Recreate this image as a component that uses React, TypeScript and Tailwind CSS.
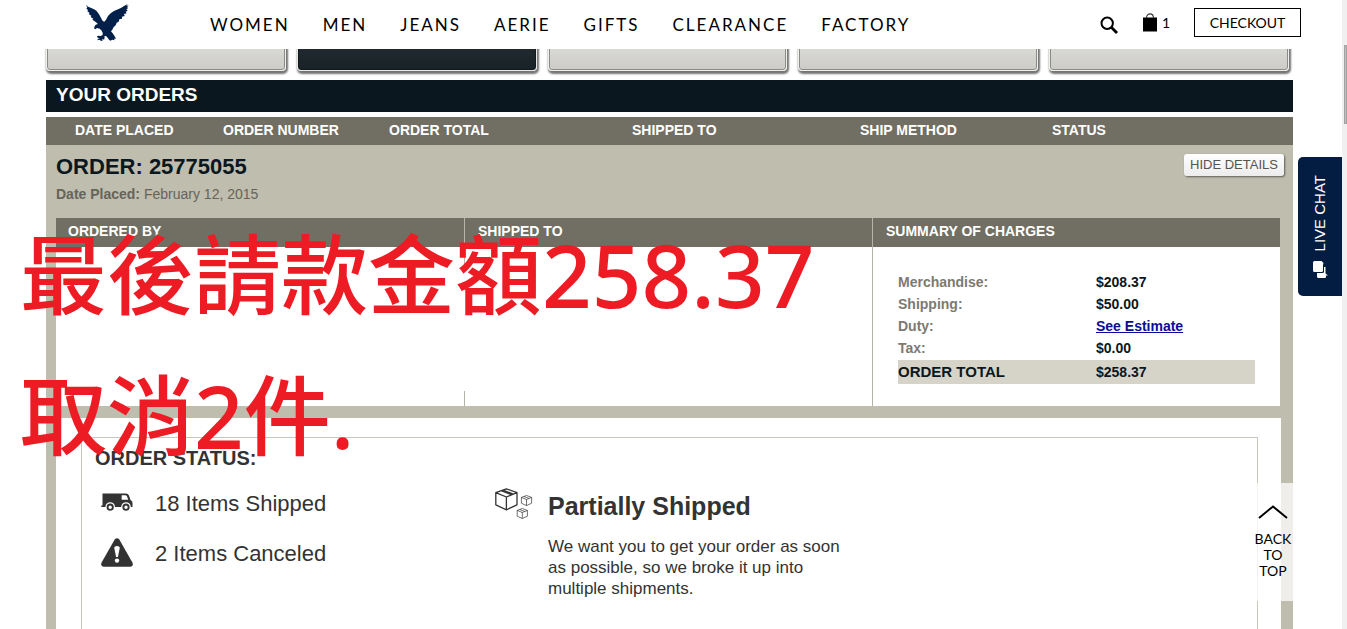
import type { ReactNode } from "react";

const navLinks = ["WOMEN", "MEN", "JEANS", "AERIE", "GIFTS", "CLEARANCE", "FACTORY"];

const accountTabs = [
    { label: "Account overview", active: false },
    { label: "Order history", active: true },
    { label: "Address book", active: false },
    { label: "Payment", active: false },
    { label: "Preferences", active: false },
];

const orderColumns = [
    { title: "DATE PLACED", width: "w-[177px] pl-[29px]" },
    { title: "ORDER NUMBER", width: "w-[166px]" },
    { title: "ORDER TOTAL", width: "w-[243px]" },
    { title: "SHIPPED TO", width: "w-[228px]" },
    { title: "SHIP METHOD", width: "w-[192px]" },
    { title: "STATUS", width: "" },
];

const charges = [
    { label: "Merchandise:", value: "$208.37" },
    { label: "Shipping:", value: "$50.00" },
    { label: "Duty:", value: "See Estimate", link: true },
    { label: "Tax:", value: "$0.00" },
];

function EagleLogo() {
    return (
        <svg viewBox="0 0 138 132" className="h-11 w-[46px]" fill="#03204a" aria-hidden="true">
            <path d="M6 11 L12 17 L20 20 L30 25 L37 29 L44 38 L50 49 L56 60 L61 62 L66 56 L72 45 L80 37 L90 30 L104 24 L112 20 L120 15 L131 9 L127 15 L134 13 L129 19 L133 21 L127 25 L131 29 L125 32 L128 37 L120 39 L122 45 L114 47 L114 53 L106 55 L104 62 L98 65 L95 73 L89 78 L85 86 L81 91 L86 97 L91 104 L96 113 L90 113 L92 118 L85 116 L79 119 L75 116 L71 110 L66 105 L62 105 L61 109 L64 112 L60 112 L61 118 L57 114 L54 116 L56 120 L50 119 L47 116 L41 118 L41 114 L47 112 L41 110 L39 106 L43 104 L50 105 L56 102 L56 95 L52 88 L47 83 L39 81 L34 85 L31 83 L31 77 L35 71 L42 69 L38 65 L31 60 L25 56 L28 53 L20 48 L22 44 L14 39 L17 36 L10 31 L12 28 L7 22 L10 20 Z" />
        </svg>
    );
}

function SearchIcon() {
    return (
        <svg viewBox="0 0 18 18" className="size-[18px]" fill="none" stroke="#000" aria-hidden="true">
            <circle cx="7.2" cy="7.2" r="5.7" strokeWidth="2" />
            <path d="M11.3 11.3 L17 17" strokeWidth="2.8" />
        </svg>
    );
}

function BagIcon() {
    return (
        <svg viewBox="0 0 16 19" className="h-[19px] w-4" aria-hidden="true">
            <path d="M1 4.5 H15 V18.5 H1 Z" fill="#000" />
            <path d="M4.5 5 C4.5 -0.5 11.5 -0.5 11.5 5" fill="none" stroke="#333" strokeWidth="1.1" />
        </svg>
    );
}

function TruckIcon() {
    return (
        <svg viewBox="0 0 32 19" className="mb-1 h-[19px] w-8" fill="#333" aria-hidden="true">
            <path fillRule="evenodd" d="M1.5 0.5 H25 Q27 0.5 28 2.5 L29.5 7 Q31.5 8 31.5 10 V14 H29.8 A4.8 4.8 0 0 0 20.2 14 H14 A4.8 4.8 0 0 0 4.4 14 H0.3 V12.5 H1.5 Z M20.7 2.2 V6.8 H27.3 L25.8 3 Q25.4 2.2 24.5 2.2 Z" />
            <path fillRule="evenodd" d="M9.2 10.6 A3.6 3.6 0 1 0 9.2 17.8 A3.6 3.6 0 1 0 9.2 10.6 Z M9.2 12.5 A1.7 1.7 0 1 1 9.2 15.9 A1.7 1.7 0 1 1 9.2 12.5 Z" />
            <path fillRule="evenodd" d="M25 10.6 A3.6 3.6 0 1 0 25 17.8 A3.6 3.6 0 1 0 25 10.6 Z M25 12.5 A1.7 1.7 0 1 1 25 15.9 A1.7 1.7 0 1 1 25 12.5 Z" />
        </svg>
    );
}

function WarningIcon() {
    return (
        <svg viewBox="0 0 32 29" className="mb-1 h-[29px] w-8" aria-hidden="true">
            <path d="M13.7 1.5 Q16 -1 18.3 1.5 L31.4 24.6 Q32.8 28 29.5 28.8 H2.5 Q-0.8 28 0.6 24.6 Z" fill="#333" />
            <path d="M13.2 9.8 Q13.4 8 16 8 Q18.6 8 18.8 9.8 L16.9 19 H15.1 Z" fill="#fff" />
            <circle cx="16" cy="22.6" r="2.2" fill="#fff" />
        </svg>
    );
}

function BoxesIcon() {
    return (
        <svg viewBox="0 0 38 31" className="h-[31px] w-[38px]" fill="none" stroke="#333" strokeLinejoin="round" aria-hidden="true">
            <path strokeWidth="1.3" d="M11.4 0.8 L22 4.6 V16.8 L11.4 21.8 L0.8 16.8 V4.6 Z M0.8 4.6 L11.4 9 L22 4.6 M11.4 9 V21.8 M6.2 2.7 L16.8 6.8 M8 2 L18.3 6.2" />
            <g strokeWidth="0.7">
                <path d="M31.5 7.5 L36.6 9.4 V15.2 L31.5 17.6 L26.4 15.2 V9.4 Z M26.4 9.4 L31.5 11.5 L36.6 9.4 M31.5 11.5 V17.6 M29 8.5 L34 10.5" />
                <path d="M27.3 20.5 L32.4 22.4 V28.2 L27.3 30.5 L22.2 28.2 V22.4 Z M22.2 22.4 L27.3 24.5 L32.4 22.4 M27.3 24.5 V30.5 M24.8 21.5 L29.8 23.5" />
            </g>
        </svg>
    );
}

function ChatIcon() {
    return (
        <svg viewBox="0 0 15 17" className="h-[17px] w-[15px]" fill="#fff" aria-hidden="true">
            <path d="M1.5 0 H8.5 L10.5 2 L10 4 V9.5 Q10 11 8.5 11 H1.5 Q0 11 0 9.5 V1.5 Q0 0 1.5 0 Z" />
            <path d="M11 6 H12.5 V12.5 L15 14.5 H13 V16 Q13 17 12 17 H5.5 Q4 17 4 15.5 V12 H9.5 Q11 12 11 10.5 Z" />
        </svg>
    );
}

function ColumnTitle({ children }: { children: ReactNode }) {
    return <h3 className="h-[29px] bg-[#716f63] text-sm leading-[27px] font-bold text-white">{children}</h3>;
}

function Header() {
    return (
        <header className="relative z-10 flex h-[49px] items-center bg-white pr-[41px] pl-[84px] font-['Lato',sans-serif] text-black">
            <a href="#" aria-label="Home" className="mb-1 w-[126px]">
                <EagleLogo />
            </a>
            <nav className="flex gap-[33px] text-[17px] tracking-[2px]">
                {navLinks.map(link => (
                    <a key={link} href="#">{link}</a>
                ))}
            </nav>
            <div className="ml-auto flex items-center">
                <button type="button" aria-label="Search" className="mr-6">
                    <SearchIcon />
                </button>
                <a href="#" className="mr-6 mb-1 flex items-center gap-1 text-sm">
                    <BagIcon />
                    <span>1</span>
                </a>
                <button type="button" className="mb-1 h-[29px] w-[107px] border border-black text-sm">CHECKOUT</button>
            </div>
        </header>
    );
}

function AccountTabs() {
    return (
        <div className="-mt-[10px] grid grid-cols-5 gap-[11px] pr-1">
            {accountTabs.map(tab => (
                <button
                    key={tab.label}
                    type="button"
                    aria-label={tab.label}
                    className={`h-8 rounded-[4px] border shadow-[1px_2px_2px_1px_rgba(0,0,0,0.55)] ring-1 ring-inset ${tab.active ? "border-[#e8e8e4] bg-linear-to-b from-[#232d33] to-[#172126] ring-[#11191d]" : "border-[#efefec] bg-linear-to-b from-[#dededa] to-[#cccbc7] ring-[#8a8a86]"}`}
                />
            ))}
        </div>
    );
}

function OrderSummary() {
    return (
        <div className="mr-[13px] ml-[10px] grid grid-cols-3 bg-white">
            <section>
                <ColumnTitle><span className="pl-3">ORDERED BY</span></ColumnTitle>
            </section>
            <section className="flex flex-col">
                <div className="border-l border-[#b5b4a8]">
                    <ColumnTitle><span className="pl-[13px]">SHIPPED TO</span></ColumnTitle>
                </div>
                <div className="h-5 border-l border-[#b5b4a8]" />
                <div className="mt-auto h-[15px] border-l border-[#b5b4a8]" />
            </section>
            <section className="border-l border-[#b5b4a8]">
                <ColumnTitle><span className="pl-[13px]">SUMMARY OF CHARGES</span></ColumnTitle>
                <div className="px-[25px] pt-[25px] pb-[22px]">
                    <table className="w-full text-left text-sm font-bold">
                        <tbody>
                            {charges.map(row => (
                                <tr key={row.label} className="h-[22px]">
                                    <th scope="row" className="w-[198px] p-0 pb-[2px] text-[#7b7a72]">{row.label}</th>
                                    <td className="p-0 pb-[2px] text-[#0b171e]">
                                        {row.link ? <a href="#" className="text-[#0c0a9c] underline">{row.value}</a> : row.value}
                                    </td>
                                </tr>
                            ))}
                            <tr className="h-6 bg-[#d6d4c8] text-[#0b171e]">
                                <th scope="row" className="p-0 text-[15px]">ORDER TOTAL</th>
                                <td className="p-0">$258.37</td>
                            </tr>
                        </tbody>
                    </table>
                </div>
            </section>
        </div>
    );
}

function OrderStatus() {
    return (
        <div className="mt-3 mr-3 ml-[10px] bg-white pt-[19px] pr-[23px] pl-[25px]">
            <div className="min-h-[220px] border border-[#c9c7bb] pt-1 pl-[13px] text-[#333]">
                <h3 className="text-xl leading-8 font-bold">ORDER STATUS:</h3>
                <div className="flex">
                    <ul className="w-[400px] pt-[5px] pl-[6px] text-[22px] leading-[50px]">
                        <li className="flex items-center gap-[22px]"><TruckIcon />18 Items Shipped</li>
                        <li className="flex items-center gap-[22px]"><WarningIcon />2 Items Canceled</li>
                    </ul>
                    <div className="flex gap-[15px] pt-[14px]">
                        <BoxesIcon />
                        <div className="w-[310px]">
                            <h4 className="text-[25px] leading-9 font-bold">Partially Shipped</h4>
                            <p className="mt-3 text-[17px] leading-[21px]">
                                We want you to get your order as soon as possible, so we broke it up into multiple shipments.
                            </p>
                        </div>
                    </div>
                </div>
            </div>
        </div>
    );
}

export default function App() {
    return (
        <div className="relative flex h-screen overflow-hidden bg-white font-['Liberation_Sans',Arial,sans-serif]">
            <div className="min-w-0 flex-1">
                <Header />
                <main className="pr-[49px] pl-[46px]">
                    <AccountTabs />
                    <h1 className="mt-[9px] h-8 bg-[#0b171e] pl-[10px] text-[19px] leading-[30px] font-bold text-white">YOUR ORDERS</h1>
                    <table className="mt-[5px] w-full table-fixed bg-[#716f63] text-left text-sm text-white">
                        <thead>
                            <tr className="h-7">
                                {orderColumns.map(col => (
                                    <th key={col.title} scope="col" className={`pb-[2px] font-bold ${col.width}`}>{col.title}</th>
                                ))}
                            </tr>
                        </thead>
                    </table>
                    <div className="bg-[#bfbdae]">
                        <div className="flex h-[73px] items-start justify-between pt-[9px] pr-[9px] pl-[10px]">
                            <div>
                                <h2 className="text-[22px] leading-[26px] font-bold text-[#0b171e]">ORDER: 25775055</h2>
                                <p className="mt-1 text-sm text-[#66645a]"><strong>Date Placed:</strong> February 12, 2015</p>
                            </div>
                            <button type="button" className="h-[22px] w-[100px] rounded-[3px] bg-linear-to-b from-white to-[#ececec] text-[13px] whitespace-nowrap text-[#55544e] shadow-[1px_1px_2px_rgba(0,0,0,0.5)]">
                                HIDE DETAILS
                            </button>
                        </div>
                        <OrderSummary />
                        <OrderStatus />
                    </div>
                </main>
            </div>

            {/* scroll track */}
            <div className="w-[5px] bg-[#f0f0f0] pt-[45px] pl-[2px]">
                <div className="h-[79px] border border-[#a3a3a3] bg-[#bcbcbc]" />
            </div>

            <button type="button" className="absolute top-[157px] right-[5px] flex h-[139px] w-11 flex-col items-center rounded-l-[5px] bg-[#021c42] pt-[18px] text-[15px] text-white">
                <span className="rotate-180 [writing-mode:vertical-rl]">LIVE CHAT</span>
                <span className="mt-[10px]"><ChatIcon /></span>
            </button>

            <a href="#" className="absolute top-[483px] right-[39px] flex h-[118px] w-[70px] flex-col items-center bg-white/75 pt-[22px] text-center font-['Lato',sans-serif] text-sm leading-4 text-black">
                <svg viewBox="0 0 30 14" className="mb-3 h-[14px] w-[30px]" fill="none" stroke="#000" strokeWidth="2" aria-hidden="true">
                    <path d="M1 13 L15 1.5 L29 13" />
                </svg>
                BACK<br />TO<br />TOP
            </a>

            {/* red note laid over the order */}
            <div className="pointer-events-none absolute top-[204px] left-[20px] font-['Noto_Sans','Noto_Sans_CJK_TC',sans-serif] text-[87px] leading-[141px] font-medium whitespace-nowrap text-[#ed1c24]">
                <p>最後請款金額258.37</p>
                <p>取消2件.</p>
            </div>
        </div>
    );
}
